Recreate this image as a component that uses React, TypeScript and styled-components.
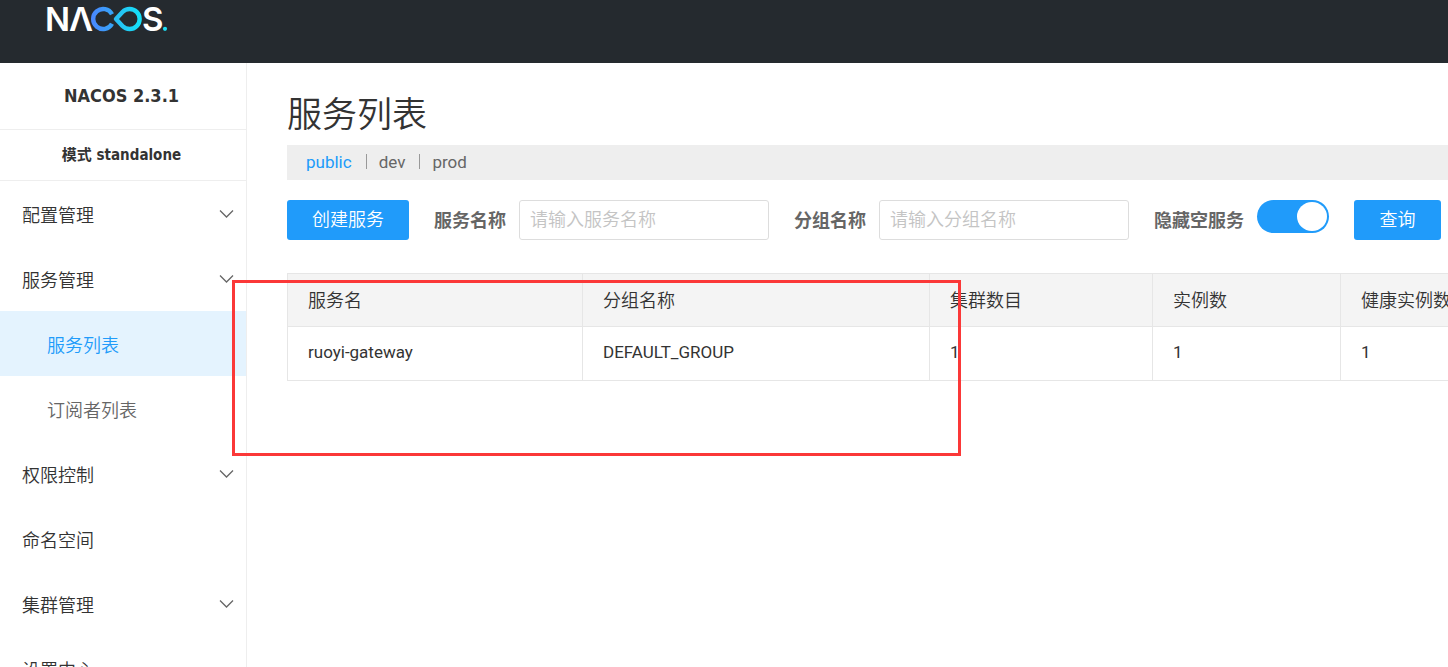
import React, { useState } from "react";
import styled, { createGlobalStyle } from "styled-components";

const sans = `Roboto, "Noto Sans CJK SC", sans-serif`;
const light = 350;

const GlobalStyle = createGlobalStyle`
  *, *::before, *::after { box-sizing: border-box; }
  body { margin: 0; background: #fff; color: #333; font-family: ${sans}; font-size: 18px; overflow: hidden; }
  button, input { font: inherit; }
`;

const Page = styled.div`
  position: relative;
  display: flex;
  flex-direction: column;
  height: 100vh;
  overflow: hidden;
`;

const Header = styled.header`
  flex: none;
  height: 63px;
  padding-left: 44px;
  background: #252a2f;
`;

const LogoLink = styled.a`
  display: inline-block;
  line-height: 0;
`;

const LogoLetter = styled.text`
  font-family: Inter, sans-serif;
  font-size: 33px;
  font-weight: 600;
  fill: #fff;
`;

const Body = styled.div`
  flex: 1;
  display: flex;
  min-height: 0;
`;

const Sidebar = styled.aside`
  flex: none;
  width: 247px;
  border-right: 1px solid #eee;
  overflow: hidden;
`;

const Info = styled.div<{ $large?: boolean }>`
  display: flex;
  align-items: center;
  justify-content: center;
  height: ${(p) => (p.$large ? 67 : 51)}px;
  padding-right: 3px;
  border-bottom: 1px solid #eee;
  font-family: "DejaVu Sans Condensed", "Noto Sans CJK SC", sans-serif;
  font-size: ${(p) => (p.$large ? 18 : 15)}px;
  line-height: 20px;
  font-weight: 700;
`;

const Menu = styled.ul`
  margin: 0;
  padding: 0;
  list-style: none;
`;

const MenuLink = styled.a<{ $sub?: boolean; $active?: boolean }>`
  display: flex;
  align-items: center;
  justify-content: space-between;
  height: 65px;
  padding: 0 12px 0 ${(p) => (p.$sub ? 47 : 22)}px;
  color: ${(p) => (p.$active ? "#209bfa" : p.$sub ? "#666" : "#333")};
  background: ${(p) => (p.$active ? "#e4f3fe" : "transparent")};
  font-weight: ${light};
  text-decoration: none;
  white-space: nowrap;
`;

const Main = styled.main`
  flex: 1;
  min-width: 0;
  padding: 24px 0 0 40px;
  overflow: hidden;
`;

const Title = styled.h1`
  margin: 0;
  height: 58px;
  font-size: 35px;
  font-weight: ${light};
  line-height: 58px;
`;

const Namespaces = styled.nav`
  display: flex;
  align-items: center;
  height: 35px;
  padding: 0 0 2px 19px;
  background: #eee;
  font-size: 17px;
`;

const NamespaceLink = styled.a<{ $active?: boolean }>`
  color: ${(p) => (p.$active ? "#209bfa" : "#666")};
  text-decoration: none;
`;

const Divider = styled.span`
  width: 1px;
  height: 15px;
  margin: 0 12px 0 14px;
  background: #999;
`;

const Filters = styled.form`
  display: flex;
  align-items: center;
  height: 40px;
  margin-top: 20px;
  white-space: nowrap;
`;

const Button = styled.button`
  flex: none;
  height: 40px;
  padding: 0 0 4px;
  border: 0;
  border-radius: 3px;
  background: #209bfa;
  color: #fff;
  font-weight: ${light};
`;

const Field = styled.label`
  flex: none;
  display: flex;
  align-items: center;
  margin-right: 25px;
  color: #666;
  font-weight: 700;
`;

const CreateButton = styled(Button)`
  width: 122px;
  margin-right: 25px;
`;

const QueryButton = styled(Button)`
  width: 87px;
`;

const Caption = styled.span<{ $wide?: boolean }>`
  width: ${(p) => (p.$wide ? 103 : 85)}px;
  padding-bottom: 3px;
`;

const TextInput = styled.input`
  width: 250px;
  height: 40px;
  padding: 0 10px 2px;
  border: 1px solid #ddd;
  border-radius: 3px;
  outline: 0;
  color: #333;
  font-weight: ${light};
  &::placeholder { color: #c4c4c4; opacity: 1; }
`;

const Switch = styled.input`
  appearance: none;
  width: 72px;
  height: 33px;
  margin: 0 0 7px;
  padding: 2px;
  border-radius: 17px;
  background: #ccc;
  &::before {
    content: "";
    display: block;
    width: 30px;
    height: 29px;
    border-radius: 50%;
    background: #fff;
  }
  &:checked { background: #209bfa; }
  &:checked::before { margin-left: auto; }
`;

const Table = styled.table`
  width: 100%;
  margin-top: 33px;
  border-collapse: collapse;
  table-layout: fixed;
  text-align: left;
`;

const Column = styled.col<{ $width?: number }>`
  width: ${(p) => (p.$width ? `${p.$width}px` : "auto")};
`;

const Cell = styled.td`
  height: 54px;
  padding: 0 0 3px 20px;
  border: 1px solid #e6e6e6;
  border-right-width: 0;
  font-size: 17px;
  white-space: nowrap;
`;

const HeadCell = styled(Cell).attrs({ as: "th", scope: "col" })`
  height: 53px;
  background: #f4f4f4;
  font-size: 18px;
  font-weight: ${light};
`;

const Highlight = styled.div`
  position: absolute;
  left: 232px;
  top: 280px;
  width: 729px;
  height: 176px;
  border: 3px solid #fb3838;
  pointer-events: none;
`;

const Logo = () => (
  <svg width="126" height="40" viewBox="44 0 126 40" role="img" aria-label="NACOS">
    <defs>
      <linearGradient id="blue" x1="91" x2="114" y1="0" y2="0" gradientUnits="userSpaceOnUse">
        <stop offset="0" stopColor="#4a86ff" />
        <stop offset="1" stopColor="#35a6f7" />
      </linearGradient>
      <linearGradient id="cyan" x1="113" x2="142" y1="0" y2="0" gradientUnits="userSpaceOnUse">
        <stop offset="0" stopColor="#2cb9f3" />
        <stop offset="1" stopColor="#12e3f8" />
      </linearGradient>
    </defs>
    <LogoLetter x="45" y="31">N</LogoLetter>
    <LogoLetter x="69" y="31">Λ</LogoLetter>
    <path d="M112 14.3 A10 10 0 1 0 112 23.7" fill="none" stroke="url(#blue)" strokeWidth="4.4" />
    <path
      d="M116 19 L122.5 12 A10 10 0 1 1 122.5 26 Z"
      fill="none"
      stroke="url(#cyan)"
      strokeWidth="4.4"
      strokeLinejoin="round"
    />
    <LogoLetter x="142" y="31">S</LogoLetter>
    <circle cx="165" cy="28.8" r="2.1" fill="#1ee0f5" />
  </svg>
);

const Chevron = () => (
  <svg width="15" height="9" viewBox="0 0 15 9" aria-hidden="true">
    <path d="M1 1.5 L7.5 8 L14 1.5" fill="none" stroke="#666" strokeWidth="1.3" />
  </svg>
);

const menu = [
  { text: "配置管理", arrow: true },
  { text: "服务管理", arrow: true },
  { text: "服务列表", sub: true, active: true },
  { text: "订阅者列表", sub: true },
  { text: "权限控制", arrow: true },
  { text: "命名空间" },
  { text: "集群管理", arrow: true },
  { text: "设置中心" },
];

const namespaces = ["public", "dev", "prod"];
const columns = [
  { title: "服务名", width: 295 },
  { title: "分组名称", width: 347 },
  { title: "集群数目", width: 223 },
  { title: "实例数", width: 188 },
  { title: "健康实例数" },
];
const services = [["ruoyi-gateway", "DEFAULT_GROUP", "1", "1", "1"]];

export default function App() {
  const [hideEmpty, setHideEmpty] = useState(true);
  return (
    <Page>
      <GlobalStyle />
      <Header>
        <LogoLink href="#">
          <Logo />
        </LogoLink>
      </Header>
      <Body>
        <Sidebar>
          <Info $large>NACOS 2.3.1</Info>
          <Info>模式 standalone</Info>
          <Menu>
            {menu.map((item) => (
              <li key={item.text}>
                <MenuLink href="#" $sub={item.sub} $active={item.active}>
                  {item.text}
                  {item.arrow && <Chevron />}
                </MenuLink>
              </li>
            ))}
          </Menu>
        </Sidebar>
        <Main>
          <Title>服务列表</Title>
          <Namespaces>
            {namespaces.map((name, i) => (
              <React.Fragment key={name}>
                {i > 0 && <Divider />}
                <NamespaceLink href="#" $active={i === 0}>
                  {name}
                </NamespaceLink>
              </React.Fragment>
            ))}
          </Namespaces>
          <Filters onSubmit={(e) => e.preventDefault()}>
            <CreateButton type="button">创建服务</CreateButton>
            <Field>
              <Caption>服务名称</Caption>
              <TextInput placeholder="请输入服务名称" />
            </Field>
            <Field>
              <Caption>分组名称</Caption>
              <TextInput placeholder="请输入分组名称" />
            </Field>
            <Field>
              <Caption $wide>隐藏空服务</Caption>
              <Switch
                type="checkbox"
                role="switch"
                checked={hideEmpty}
                onChange={(e) => setHideEmpty(e.target.checked)}
              />
            </Field>
            <QueryButton type="submit">查询</QueryButton>
          </Filters>
          <Table>
            <colgroup>
              {columns.map((c) => (
                <Column key={c.title} $width={c.width} />
              ))}
            </colgroup>
            <thead>
              <tr>
                {columns.map((c) => (
                  <HeadCell key={c.title}>{c.title}</HeadCell>
                ))}
              </tr>
            </thead>
            <tbody>
              {services.map((row) => (
                <tr key={row[0]}>
                  {row.map((value, i) => (
                    <Cell key={i}>{value}</Cell>
                  ))}
                </tr>
              ))}
            </tbody>
          </Table>
        </Main>
      </Body>
      <Highlight />
    </Page>
  );
}
